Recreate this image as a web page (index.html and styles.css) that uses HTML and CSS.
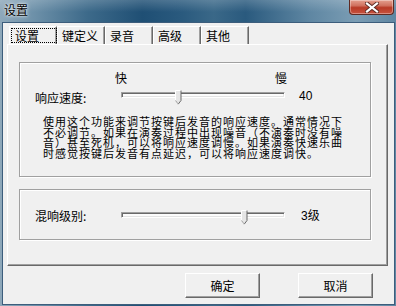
FILE: index.html
```html
<!DOCTYPE html>
<html lang="zh-CN">
<head>
  <meta charset="UTF-8">
  <title>设置</title>
  <link rel="stylesheet" href="styles.css">
</head>
<body>
  <div class="window">
    <!-- Barra de título -->
    <div class="titlebar">
      <span class="title">设置</span>
      <div class="close-btn">
        <svg width="14" height="11" viewBox="0 0 14 11">
          <path d="M2 1.5 L12 9.5 M12 1.5 L2 9.5" stroke="#5a2a24" stroke-width="4" stroke-linecap="square"/>
          <path d="M2 1.5 L12 9.5 M12 1.5 L2 9.5" stroke="#fff" stroke-width="2.2" stroke-linecap="square"/>
        </svg>
      </div>
    </div>

    <div class="dialog">
      <!-- Abas -->
      <div class="tabs">
        <div class="tab active"><span class="focus">设置</span></div>
        <div class="tab">键定义</div>
        <div class="tab">录音</div>
        <div class="tab">高级</div>
        <div class="tab">其他</div>
      </div>

      <div class="pane">
        <div class="group group-speed">
          <div class="scale-row">
            <span class="scale-fast">快</span>
            <span class="scale-slow">慢</span>
          </div>
          <div class="slider-row">
            <span class="label">响应速度:</span>
            <div class="track">
              <svg class="thumb" style="left: 53px" width="7" height="15" viewBox="0 0 7 15">
                <path d="M0.5 0.5 H6 V10.5 L3.2 14.2 L0.5 10.5 Z" fill="#e6e6e6"/>
                <path d="M0.5 10.5 V0.5 H6" stroke="#fff" fill="none"/>
                <path d="M6 0.5 V10.5 L3.2 14.2" stroke="#696969" fill="none"/>
                <path d="M0.5 10.5 L3 13.8" stroke="#a0a0a0" fill="none"/>
              </svg>
            </div>
            <span class="value">40</span>
          </div>
          <div class="hint">
            <div class="line">使用这个功能来调节按键后发音的响应速度。通常情况下</div>
            <div class="line">不必调节。如果在演奏过程中出现噪音（不演奏时没有噪</div>
            <div class="line">音）甚至死机，可以将响应速度调慢。如果演奏快速乐曲</div>
            <div class="line">时感觉按键后发音有点延迟，可以将响应速度调快。</div>
          </div>
        </div>

        <div class="group group-reverb">
          <div class="slider-row">
            <span class="label">混响级别:</span>
            <div class="track">
              <svg class="thumb" style="left: 119px" width="7" height="15" viewBox="0 0 7 15">
                <path d="M0.5 0.5 H6 V10.5 L3.2 14.2 L0.5 10.5 Z" fill="#e6e6e6"/>
                <path d="M0.5 10.5 V0.5 H6" stroke="#fff" fill="none"/>
                <path d="M6 0.5 V10.5 L3.2 14.2" stroke="#696969" fill="none"/>
                <path d="M0.5 10.5 L3 13.8" stroke="#a0a0a0" fill="none"/>
              </svg>
            </div>
            <span class="value value-level">3级</span>
          </div>
        </div>
      </div>

      <!-- Botões -->
      <div class="buttons">
        <button class="btn">确定</button>
        <button class="btn">取消</button>
      </div>
    </div>
  </div>
</body>
</html>
```

FILE: styles.css
```css
/* Geral */
body {
  margin: 0;
  font-family: "Noto Sans CJK SC", "Liberation Sans", sans-serif;
  font-size: 12px;
  color: #000;
}
.window {
  width: 396px;
  height: 306px;
  display: flex;
  flex-direction: column;
  background:
    linear-gradient(180deg, rgba(255,255,255,0.18) 0px, rgba(255,255,255,0) 12px),
    linear-gradient(90deg, #8ea8ba 0%, #6f92aa 8%, #3d6a8a 22%, #1f4f74 36%, #2a5a7e 46%, #3a6888 54%, #2a5a7e 62%, #5e86a2 78%, #7b9db4 90%, #5f86a2 100%);
  overflow: hidden;
}
/* Barra de título */
.titlebar {
  height: 23px;
  display: flex;
  align-items: flex-start;
}
.title {
  margin: 3px 0 0 4px;
  line-height: 14px;
  font-size: 12px;
  color: #000;
  text-shadow: 0 0 4px rgba(255,255,255,0.9), 0 0 2px rgba(255,255,255,0.9);
}
.close-btn {
  margin-left: auto;
  margin-right: 2px;
  width: 45px;
  height: 15px;
  box-sizing: border-box;
  border: 1px solid #5e2a22;
  border-top: none;
  border-radius: 0 0 4px 4px;
  background: linear-gradient(180deg, #e4a08f 0%, #d0715f 40%, #b83a26 55%, #c7533f 100%);
  box-shadow: inset 0 0 0 1px rgba(255,255,255,0.35);
  display: flex;
  align-items: center;
  justify-content: center;
}
/* Corpo do diálogo */
.dialog {
  flex: 1;
  margin: 0 2px 2px 3px;
  background: #f0f0f0;
  box-shadow: 0 0 0 1px #3c5d7c;
  display: flex;
  flex-direction: column;
}
/* Abas */
.tabs {
  display: flex;
  margin-top: 3px;
  padding-left: 6px;
  height: 18px;
}
.tab {
  width: 48px;
  box-sizing: border-box;
  border-top: 1px solid #fff;
  border-left: 1px solid #fff;
  border-right: 1px solid #696969;
  box-shadow: inset -1px 0 #a0a0a0;
  padding: 2px 0 0 4px;
  line-height: 13px;
}
.tab.active {
  padding: 1px 0 0 1px;
}
.focus {
  display: inline-block;
  width: 41px;
  height: 13px;
  padding-left: 3px;
  border: 1px dotted #000;
}
.pane {
  margin-left: 4px;
  width: 381px;
  height: 222px;
  box-sizing: border-box;
  border-top: 1px solid #fff;
  border-left: 1px solid #fff;
  border-right: 1px solid #696969;
  border-bottom: 1px solid #696969;
  box-shadow: inset -1px -1px #a0a0a0;
  padding: 17px 0 0 11px;
}
/* Caixas de grupo */
.group {
  width: 352px;
  box-sizing: border-box;
  border: 1px solid #a0a0a0;
  box-shadow: inset 1px 1px #fff, 1px 1px #fff;
  padding-left: 15px;
}
.group-speed {
  height: 115px;
  padding-top: 9px;
}
.group-reverb {
  height: 51px;
  margin-top: 12px;
  padding-top: 20px;
}
.scale-row {
  display: flex;
  line-height: 12px;
}
.scale-fast {
  margin-left: 80px;
}
.scale-slow {
  margin-left: 148px;
}
.slider-row {
  display: flex;
  align-items: flex-start;
  height: 16px;
}
.group-speed .slider-row {
  margin-top: 5px;
}
.label {
  width: 86px;
  margin-top: 3px;
  line-height: 12px;
}
.group-reverb .label {
  margin-top: 0;
}
.track {
  position: relative;
  width: 164px;
  height: 6px;
  box-sizing: border-box;
  margin-top: 3px;
  border-top: 1px solid #a0a0a0;
  border-left: 1px solid #a0a0a0;
  border-right: 1px solid #fff;
  border-bottom: 1px solid #fff;
  box-shadow: inset 1px 1px #696969, inset -1px -1px #e3e3e3;
  background: #fcfcfc;
}
.group-reverb .track {
  margin-top: 2px;
}
.thumb {
  position: absolute;
  top: -3px;
}
.value {
  margin: 1px 0 0 14px;
  line-height: 12px;
  font-family: "Liberation Sans", "Noto Sans CJK SC", sans-serif;
}
.value-level {
  margin: 0 0 0 16px;
}
.hint {
  margin: 11px 0 0 8px;
  font-size: 11px;
  letter-spacing: 1px;
  white-space: nowrap;
}
.hint .line {
  height: 10.6px;
  line-height: 10.6px;
}
/* Botões */
.buttons {
  display: flex;
  justify-content: flex-end;
  gap: 38px;
  margin-top: 7px;
  padding-right: 21px;
}
.btn {
  width: 75px;
  height: 25px;
  padding: 0;
  font-family: inherit;
  font-size: 12px;
  background: #f0f0f0;
  border-top: 1px solid #fff;
  border-left: 1px solid #fff;
  border-right: 1px solid #696969;
  border-bottom: 1px solid #696969;
  box-shadow: inset -1px -1px #a0a0a0;
}
```
